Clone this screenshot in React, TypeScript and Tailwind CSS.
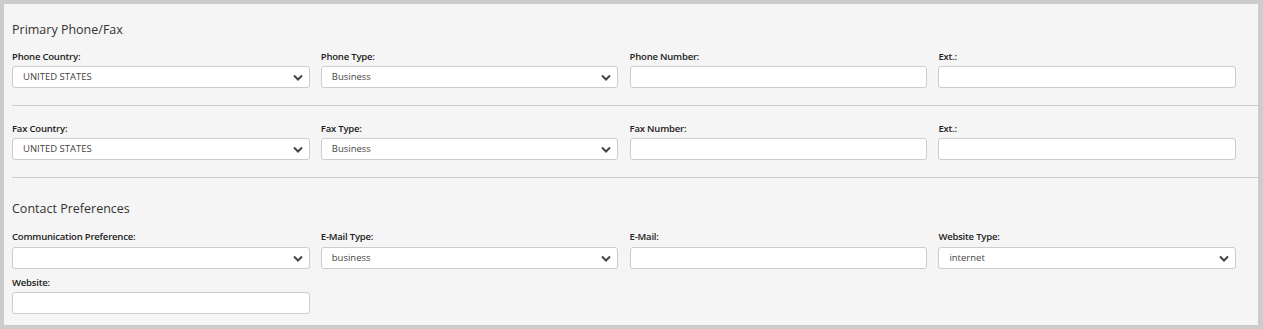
import React from 'react';

const font = { fontFamily: '"Open Sans", "Liberation Sans", sans-serif' };

function Chevron() {
  return (
    <svg width="10" height="7" viewBox="0 0 10 7" className="shrink-0">
      <polyline points="1,1.5 5,5.5 9,1.5" fill="none" stroke="#444" strokeWidth="2" />
    </svg>
  );
}

function SelectBox({ value }: { value?: string }) {
  return (
    <div className="flex h-[22px] items-center justify-between rounded-[3px] border border-[#cccccc] bg-white pl-[10px] pr-[6px]">
      <span className="text-[9.5px] text-[#444]">{value}</span>
      <Chevron />
    </div>
  );
}

function TextBox() {
  return <div className="h-[22px] rounded-[3px] border border-[#cccccc] bg-white" />;
}

function Label({ text, tall }: { text: string; tall?: boolean }) {
  return (
    <div className={`${tall ? 'mb-[3px]' : 'mb-[2px]'} text-[9.5px] font-semibold leading-[14px] tracking-[-0.2px] text-[#222]`}>
      {text}
    </div>
  );
}

function Field({ label, select, value, tall }: { label: string; select?: boolean; value?: string; tall?: boolean }) {
  return (
    <div className="w-[297.5px]">
      <Label text={label} tall={tall} />
      {select ? <SelectBox value={value} /> : <TextBox />}
    </div>
  );
}

export default function App() {
  return (
    <div className="h-[329px] w-[1263px] bg-[#cccccc] pb-[4px] pl-[4px] pr-[5px] pt-[4px]" style={font}>
      <div className="h-full bg-[#f5f5f5] pl-[8px] pt-[17px]">
        {/* Primary Phone/Fax */}
        <h3 className="text-[12.5px] leading-[18px] text-[#333]">Primary Phone/Fax</h3>
        <div className="mt-[11px] flex gap-[11.3px]">
          <Field label="Phone Country:" select value="UNITED STATES" />
          <Field label="Phone Type:" select value="Business" />
          <Field label="Phone Number:" />
          <Field label="Ext.:" />
        </div>
        <div className="mt-[17px] h-px bg-[#cccccc]" />
        <div className="mt-[16px] flex gap-[11.3px]">
          <Field label="Fax Country:" select value="UNITED STATES" />
          <Field label="Fax Type:" select value="Business" />
          <Field label="Fax Number:" />
          <Field label="Ext.:" />
        </div>
        <div className="mt-[17px] h-px bg-[#cccccc]" />

        {/* Contact Preferences */}
        <h3 className="mt-[22px] text-[12.5px] leading-[18px] text-[#333]">Contact Preferences</h3>
        <div className="mt-[12px] flex flex-wrap gap-x-[11.3px] gap-y-[7px]">
          <Field label="Communication Preference:" select value="" tall />
          <Field label="E-Mail Type:" select value="business" tall />
          <Field label="E-Mail:" tall />
          <Field label="Website Type:" select value="internet" tall />
          <Field label="Website:" />
        </div>
      </div>
    </div>
  );
}
